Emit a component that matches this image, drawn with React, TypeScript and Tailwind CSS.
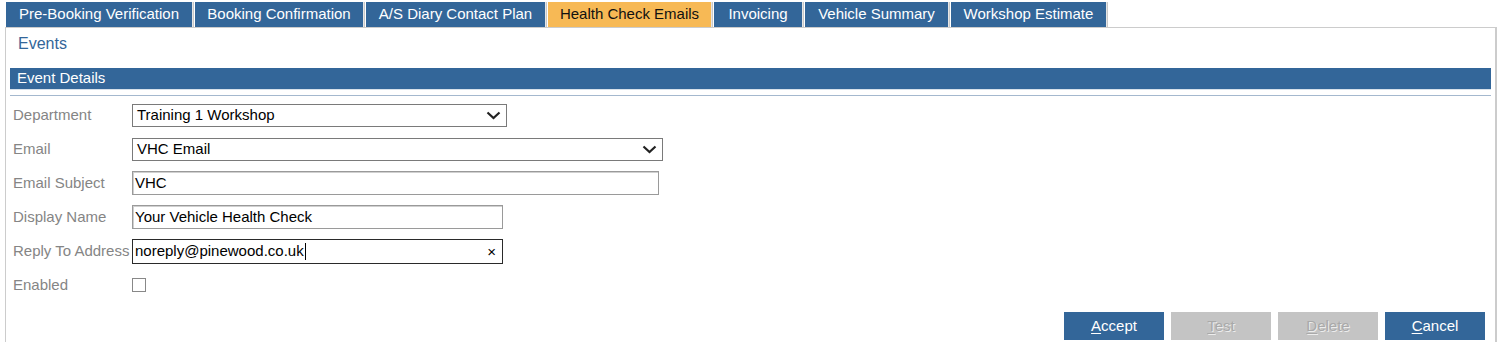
const tabs = [
  { label: "Pre-Booking Verification", w: "w-[186px]" },
  { label: "Booking Confirmation", w: "w-[168px]" },
  { label: "A/S Diary Contact Plan", w: "w-[179px]" },
  { label: "Health Check Emails", w: "w-[163px]", active: true },
  { label: "Invoicing", w: "w-[88px]" },
  { label: "Vehicle Summary", w: "w-[143px]" },
  { label: "Workshop Estimate", w: "w-[155px]" },
];

const Chevron = () => (
  <svg width="15" height="9" viewBox="0 0 15 9" className="shrink-0">
    <path d="M1.5 1.5 L7.5 7 L13.5 1.5" fill="none" stroke="#222" strokeWidth="2.2" />
  </svg>
);

const Row = ({ label, children }: { label: string; children: React.ReactNode }) => (
  <div className="flex items-center h-[34px]">
    <div className="w-[119px] shrink-0 text-[15px] text-[#858585] whitespace-nowrap">{label}</div>
    {children}
  </div>
);

const Button = ({ first, rest, disabled }: { first: string; rest: string; disabled?: boolean }) => (
  <button
    className={
      disabled
        ? "w-[100px] h-[28px] bg-[#c4c4c4] text-[15px] text-[#a9a9a9] [text-shadow:1px_1px_0_#ededed]"
        : "w-[100px] h-[28px] bg-[#336699] text-[15px] text-white"
    }
  >
    <span className="underline underline-offset-2">{first}</span>
    {rest}
  </button>
);

export default function App() {
  return (
    <div className="w-[1502px] h-[342px] overflow-hidden bg-white pt-[2px] pl-[5px] font-['Liberation_Sans',Arial,sans-serif]">
      {/* tab strip */}
      <div className="flex h-[25px] pl-[1px]">
        {tabs.map((t) => (
          <div key={t.label} className="flex h-full">
            <div
              className={`${t.w} h-full flex items-center justify-center text-[15px] ${
                t.active ? "bg-[#f7b955] text-[#111]" : "bg-[#336699] text-white"
              }`}
            >
              {t.label}
            </div>
            <div className="w-[3px] h-full flex">
              <div className="w-[1px] bg-[#e6e6e6]" />
              <div className="w-[1px] bg-[#c9c9c9]" />
              <div className="w-[1px] bg-white" />
            </div>
          </div>
        ))}
      </div>

      {/* panel */}
      <div className="w-[1492px] h-[320px] border-l border-r-2 border-t border-[#cccccc] px-[4px]">
        <div className="h-[40px] flex items-center pb-[8px] pl-[8px] text-[16px] text-[#336699]">Events</div>

        <div className="h-[21px] bg-[#336699] flex items-center pl-[7px] text-[15px] text-white">Event Details</div>
        <div className="h-[1px] bg-[#d6e0ea]" />
        <div className="h-[5px]" />
        <div className="h-[1px] bg-[#a4b8ce]" />

        <div className="pt-[2px] pl-[3px]">
          <Row label="Department">
            <div className="w-[375px] h-[23px] border border-[#7a7a7a] flex items-center justify-between pl-[4px] pr-[5px] text-[15px] text-black">
              <span>Training 1 Workshop</span>
              <Chevron />
            </div>
          </Row>
          <Row label="Email">
            <div className="w-[531px] h-[23px] border border-[#7a7a7a] flex items-center justify-between pl-[4px] pr-[5px] text-[15px] text-black">
              <span>VHC Email</span>
              <Chevron />
            </div>
          </Row>
          <Row label="Email Subject">
            <div className="w-[527px] h-[24px] border border-[#9a9a9a] shadow-[inset_1px_1px_0_#d0d0d0] flex items-center pl-[2px] text-[15px] text-black">
              VHC
            </div>
          </Row>
          <Row label="Display Name">
            <div className="w-[371px] h-[24px] border border-[#9a9a9a] shadow-[inset_1px_1px_0_#d0d0d0] flex items-center pl-[2px] text-[15px] text-black">
              Your Vehicle Health Check
            </div>
          </Row>
          <Row label="Reply To Address">
            <div className="w-[371px] h-[25px] border border-[#2a2a2a] flex items-center justify-between pl-[2px] pr-[6px] text-[15px] text-black">
              <span className="flex items-center">
                noreply@pinewood.co.uk
                <span className="inline-block w-[1px] h-[17px] bg-black ml-[1px]" />
              </span>
              <span className="text-[15px] leading-none">×</span>
            </div>
          </Row>
          <Row label="Enabled">
            <div className="w-[14px] h-[14px] border border-[#888888] bg-white" />
          </Row>
        </div>

        <div className="flex justify-end gap-[7px] mt-[10px] pr-[6px]">
          <Button first="A" rest="ccept" />
          <Button first="T" rest="est" disabled />
          <Button first="D" rest="elete" disabled />
          <Button first="C" rest="ancel" />
        </div>
      </div>
    </div>
  );
}
